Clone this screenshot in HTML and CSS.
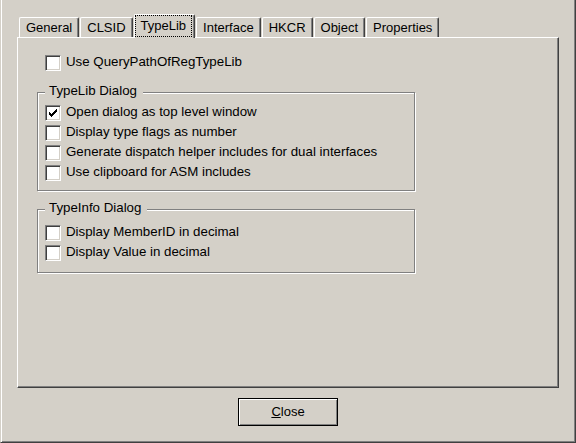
FILE: index.html
```html
<!DOCTYPE html>
<html>
<head>
<meta charset="utf-8">
<link rel="stylesheet" href="styles.css">
</head>
<body>
<div class="window">
  <div class="tabs">
    <div class="tab">General</div>
    <div class="tab">CLSID</div>
    <div class="tab tab-active"><span class="focus">TypeLib</span></div>
    <div class="tab">Interface</div>
    <div class="tab">HKCR</div>
    <div class="tab">Object</div>
    <div class="tab">Properties</div>
  </div>
  <div class="panel">
    <div class="check check-top"><span class="box"></span><span class="label">Use QueryPathOfRegTypeLib</span></div>
    <div class="group group-lib">
      <div class="legend">TypeLib Dialog</div>
      <div class="check"><span class="box"><svg class="tick" width="8" height="8" viewBox="0 0 8 8"><path d="M0 3h1v3H0z M1 4h1v3H1z M2 5h1v3H2z M3 4h1v3H3z M4 3h1v3H4z M5 2h1v3H5z M6 1h1v3H6z M7 0h1v3H7z" fill="#000"/></svg></span><span class="label">Open dialog as top level window</span></div>
      <div class="check"><span class="box"></span><span class="label">Display type flags as number</span></div>
      <div class="check"><span class="box"></span><span class="label">Generate dispatch helper includes for dual interfaces</span></div>
      <div class="check"><span class="box"></span><span class="label">Use clipboard for ASM includes</span></div>
    </div>
    <div class="group group-info">
      <div class="legend">TypeInfo Dialog</div>
      <div class="check"><span class="box"></span><span class="label">Display MemberID in decimal</span></div>
      <div class="check"><span class="box"></span><span class="label">Display Value in decimal</span></div>
    </div>
  </div>
  <div class="actions">
    <div class="btn"><span><u>C</u>lose</span></div>
  </div>
</div>
</body>
</html>
```

FILE: styles.css
```css
html, body {
  margin: 0;
  padding: 0;
  background: #d4d0c8;
}

body {
  font-family: "Liberation Sans", Arial, sans-serif;
  font-size: 13px;
  color: #000;
}

.window {
  width: 576px;
  height: 443px;
  box-sizing: border-box;
  display: flex;
  flex-direction: column;
  padding: 14px 16px 0 16px;
  border-left: 1px solid #d4d0c8;
  border-right: 1px solid #404040;
  border-bottom: 1px solid #404040;
  box-shadow: inset 1px 0 0 #ffffff, inset -1px -1px 0 #808080;
  background: #d4d0c8;
}

.tabs {
  display: flex;
  align-items: flex-end;
  gap: 1px;
  padding-left: 2px;
  height: 23px;
}

.tab {
  padding: 2px 6px 2px 6px;
  line-height: 15px;
  white-space: nowrap;
  border-top: 1px solid #ffffff;
  border-left: 1px solid #ffffff;
  border-right: 1px solid #404040;
  border-radius: 2px 2px 0 0;
  box-shadow: inset -1px 0 0 #808080;
  background: #d4d0c8;
}

.tab-active {
  position: relative;
  z-index: 1;
  padding: 0 2px 1px 0;
  margin-bottom: -1px;
}

.focus {
  display: block;
  border: 1px dotted #000;
  padding: 2px 5px 3px 5px;
  line-height: 15px;
}

.panel {
  height: 351px;
  box-sizing: border-box;
  flex: none;
  display: flex;
  flex-direction: column;
  align-items: flex-start;
  padding: 17px 0 0 19px;
  border-top: 1px solid #ffffff;
  border-left: 1px solid #ffffff;
  border-right: 1px solid #404040;
  border-bottom: 1px solid #404040;
  box-shadow: inset -1px -1px 0 #808080;
}

.check {
  display: flex;
  align-items: flex-start;
  gap: 5px;
}

.check-top {
  margin-left: 8px;
  margin-bottom: 21px;
}

.box {
  width: 16px;
  height: 16px;
  box-sizing: border-box;
  flex: none;
  background: #ffffff;
  border: 1px solid;
  border-color: #808080 #ffffff #ffffff #808080;
  box-shadow: inset 1px 1px 0 #404040, inset -1px -1px 0 #d4d0c8;
  display: flex;
  align-items: center;
  justify-content: center;
}

.tick {
  display: block;
  shape-rendering: crispEdges;
}

.label {
  font-size: 13.3px;
  line-height: 13px;
  white-space: nowrap;
}

.group {
  width: 378px;
  box-sizing: border-box;
  display: flex;
  flex-direction: column;
  align-items: flex-start;
  gap: 4px;
  padding: 0 7px 9px 7px;
  border: 1px solid #808080;
  box-shadow: inset 1px 1px 0 #ffffff, 1px 1px 0 #ffffff;
}

.legend {
  font-size: 13.3px;
  margin-top: -10px;
  margin-bottom: 3px;
  padding: 0 6px 0 4px;
  line-height: 15px;
  background: #d4d0c8;
  white-space: nowrap;
}

.group-info {
  margin-top: 18px;
  padding-bottom: 11px;
}

.group-info .legend {
  margin-bottom: 6px;
}

.actions {
  display: flex;
  justify-content: center;
  padding-top: 10px;
}

.btn {
  width: 100px;
  height: 28px;
  box-sizing: border-box;
  display: flex;
  align-items: center;
  justify-content: center;
  border: 1px solid #000;
  box-shadow: inset 1px 1px 0 #ffffff, inset -1px -1px 0 #808080;
  background: #d4d0c8;
  line-height: 15px;
}

.btn span {
  margin-top: -1px;
}

.btn u {
  text-decoration-thickness: 1px;
}
```
